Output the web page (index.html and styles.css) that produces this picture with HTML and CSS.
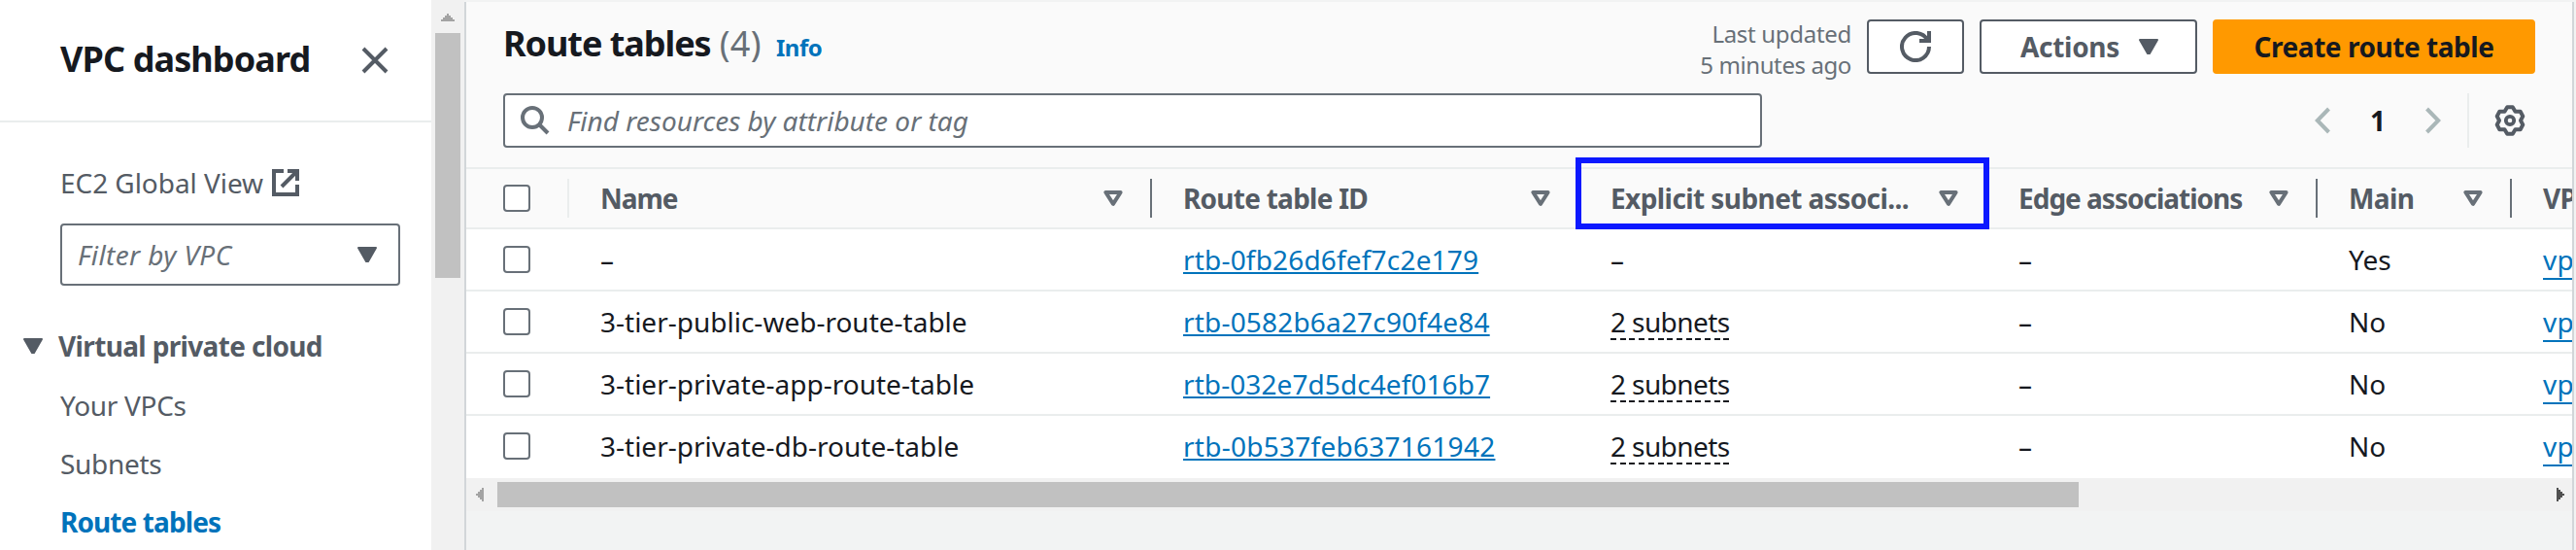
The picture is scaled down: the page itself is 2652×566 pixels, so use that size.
FILE: index.html
```
<!DOCTYPE html>
<html lang="en">
<head>
<meta charset="utf-8">
<title>Route tables | VPC</title>
<link rel="stylesheet" href="styles.css">
</head>
<body>
<svg class="defs" width="0" height="0" aria-hidden="true">
  <symbol id="caret" viewBox="0 0 20 16"><path d="M1 1h18L11 15H9z" fill="currentColor" stroke="currentColor" stroke-width="2" stroke-linejoin="round"/></symbol>
  <symbol id="sort" viewBox="0 0 20 16"><path d="M2.4 2h15.2L10 13.8z" fill="none" stroke="currentColor" stroke-width="4" stroke-linejoin="round"/></symbol>
</svg>
<div class="app">
  <aside class="side">
    <div class="side-main">
      <header class="side-head">
        <h2 class="side-title">VPC dashboard</h2>
        <svg class="close" viewBox="0 0 28 28"><path d="M2 2l24 24M26 2L2 26" fill="none" stroke="currentColor" stroke-width="4"/></svg>
      </header>
      <nav class="side-body">
        <a class="global">EC2 Global View
          <svg class="ext" viewBox="0 0 28 28"><path d="M12 2H2v24h24V16M16 2h10v10M25 3L10 18" fill="none" stroke="currentColor" stroke-width="4"/></svg>
        </a>
        <div class="select"><span class="select-text">Filter by VPC</span><svg class="caret"><use href="#caret"/></svg></div>
        <div class="group"><svg class="caret"><use href="#caret"/></svg><span>Virtual private cloud</span></div>
        <a class="item">Your VPCs</a>
        <a class="item">Subnets</a>
        <a class="item active">Route tables</a>
      </nav>
    </div>
    <div class="vbar">
      <svg class="up" viewBox="0 0 14 8" shape-rendering="crispEdges"><path d="M0 8V6h2V4h2V2h2V0h2v2h2v2h2v2h2v2z" fill="#a3a3a3"/></svg>
      <div class="vthumb"></div>
    </div>
  </aside>
  <main class="panel">
    <section class="tools">
      <div class="row">
        <h1 class="title">Route tables</h1><span class="count">(4)</span><a class="info">Info</a>
        <div class="updated"><div>Last updated</div><div class="ago">5 minutes ago</div></div>
        <button class="btn refresh"><svg class="ic32" viewBox="0 0 32 32"><path d="M30 16a14 14 0 1 1-1.6-6.5" fill="none" stroke="currentColor" stroke-width="4"/><path d="M20 10h10V0" fill="none" stroke="currentColor" stroke-width="4"/></svg></button>
        <button class="btn actions"><span>Actions</span><svg class="caret"><use href="#caret"/></svg></button>
        <button class="btn create">Create route table</button>
      </div>
      <div class="row">
        <div class="search">
          <svg class="glass" viewBox="0 0 30 30"><circle cx="12" cy="12" r="10" fill="none" stroke="currentColor" stroke-width="4"/><path d="M19 19l9 9" stroke="currentColor" stroke-width="4"/></svg>
          <span>Find resources by attribute or tag</span>
        </div>
        <div class="pager">
          <svg class="chev" viewBox="0 0 16 28"><path d="M14.5 2L2.8 14l11.7 12" fill="none" stroke="currentColor" stroke-width="4"/></svg>
          <b class="page">1</b>
          <svg class="chev" viewBox="0 0 16 28"><path d="M1.5 2l11.7 12L1.5 26" fill="none" stroke="currentColor" stroke-width="4"/></svg>
        </div>
        <div class="prefs"><svg class="ic32" viewBox="0 0 32 32"><path d="M13.2 2.2h5.6L21.5 6.7h5.2l2.6 4.9L27 16l2.3 4.4-2.6 4.9h-5.2l-2.7 4.5h-5.6l-2.7-4.5H5.3l-2.6-4.9L5 16l-2.3-4.4 2.6-4.9h5.2z" fill="none" stroke="currentColor" stroke-width="4" stroke-linejoin="round"/><circle cx="16" cy="16" r="4.2" fill="none" stroke="currentColor" stroke-width="3.8"/></svg></div>
      </div>
    </section>
    <div class="grid-wrap">
      <table class="grid">
        <colgroup><col class="c0"><col class="c1"><col class="c2"><col class="c3"><col class="c4"><col class="c5"><col class="c6"></colgroup>
        <thead>
          <tr>
            <th><div class="h pick"><i class="box"></i></div></th>
            <th><div class="h"><span class="tight">Name</span><svg class="caret"><use href="#sort"/></svg></div></th>
            <th><div class="h bare"><span>Route table ID</span><svg class="caret"><use href="#sort"/></svg></div></th>
            <th class="marked"><div class="h bare"><span class="loose">Explicit subnet associ...</span><svg class="caret"><use href="#sort"/></svg></div></th>
            <th><div class="h"><span class="tight">Edge associations</span><svg class="caret"><use href="#sort"/></svg></div></th>
            <th><div class="h"><span class="loose">Main</span><svg class="caret"><use href="#sort"/></svg></div></th>
            <th><div class="h bare"><span>VPC</span></div></th>
          </tr>
        </thead>
        <tbody>
          <tr><td><i class="box"></i></td><td>–</td><td><a class="id">rtb-0fb26d6fef7c2e179</a></td><td>–</td><td>–</td><td>Yes</td><td><a class="vpc">vpc</a></td></tr>
          <tr><td><i class="box"></i></td><td>3-tier-public-web-route-table</td><td><a class="id">rtb-0582b6a27c90f4e84</a></td><td><span class="subs">2 subnets</span></td><td>–</td><td>No</td><td><a class="vpc">vpc</a></td></tr>
          <tr><td><i class="box"></i></td><td>3-tier-private-app-route-table</td><td><a class="id snug">rtb-032e7d5dc4ef016b7</a></td><td><span class="subs">2 subnets</span></td><td>–</td><td>No</td><td><a class="vpc">vpc</a></td></tr>
          <tr><td><i class="box"></i></td><td>3-tier-private-db-route-table</td><td><a class="id wide">rtb-0b537feb637161942</a></td><td><span class="subs">2 subnets</span></td><td>–</td><td>No</td><td><a class="vpc">vpc</a></td></tr>
        </tbody>
      </table>
    </div>
    <div class="hbar">
      <svg class="side-arrow" viewBox="0 0 8 14" shape-rendering="crispEdges"><path d="M8 0H6v2H4v2H2v2H0v2h2v2h2v2h2v2h2z" fill="#a3a3a3"/></svg>
      <div class="hthumb"></div>
      <svg class="side-arrow" viewBox="0 0 8 14" shape-rendering="crispEdges"><path d="M0 0h2v2h2v2h2v2h2v2H6v2H4v2H2v2H0z" fill="#505050"/></svg>
    </div>
  </main>
</div>
</body>
</html>
```
FILE: styles.css
```
*, *::after { box-sizing: border-box; }
body {
  margin: 0;
  background: #f2f3f3;
  color: #16191f;
  font: 28px/40px "Noto Sans", "Open Sans", sans-serif;
  overflow: hidden;
}
.defs { position: absolute; }
svg { display: block; flex: none; }
h1, h2 { margin: 0; font-size: 36px; font-weight: 700; }
.app { display: flex; height: 566px; overflow: hidden; }
.caret { width: 20px; height: 16px; }
.ic32 { width: 32px; height: 32px; }

/* Sidebar */
.side { display: flex; width: 478px; flex: none; background: #fff; color: #545b64; }
.side-main { width: 444px; }
.side-head {
  display: flex; align-items: center; justify-content: space-between;
  height: 126px; padding: 0 44px 0 62px; border-bottom: 2px solid #eaeded;
}
.side-title { color: #16191f; line-height: 48px; letter-spacing: -0.9px; padding-bottom: 3px; }
.close { width: 28px; height: 28px; }
.side-body { padding: 42px 32px 0 62px; }
.global { display: flex; align-items: center; gap: 9px; height: 40px; letter-spacing: -0.05px; }
.ext { width: 28px; height: 28px; }
.select {
  display: flex; align-items: center; justify-content: space-between;
  width: 350px; height: 64px; margin-top: 22px; padding: 0 22px 0 16px;
  border: 2px solid #687078; border-radius: 4px;
}
.select-text { color: #687078; font-style: italic; letter-spacing: 0.4px; }
.group {
  display: flex; align-items: center; gap: 16px;
  height: 40px; margin: 42px 0 21px -38px;
  font-weight: 700; letter-spacing: -0.65px;
}
.item { display: block; height: 40px; margin-bottom: 20px; letter-spacing: -0.3px; }
.item.active { color: #0073bb; font-weight: 700; letter-spacing: -0.9px; }
.vbar { width: 34px; padding-top: 14px; background: #f1f1f1; }
.up { width: 14px; height: 8px; margin-left: 10px; }
.vthumb { width: 26px; height: 252px; margin: 12px 0 0 4px; background: #c1c1c1; }

/* Route table panel */
.panel {
  width: 2172px; flex: none; margin-top: 2px;
  border-left: 2px solid #d2d6d9; border-right: 2px solid #d2d6d9;
}
.tools {
  display: flex; flex-direction: column; gap: 20px;
  height: 172px; padding: 18px 38px 0 38px;
  background: #fafafa; border-bottom: 2px solid #eaeded;
}
.row { display: flex; align-items: center; height: 56px; }
.title { letter-spacing: -1.05px; line-height: 44px; padding-bottom: 7px; }
.count { margin-left: 9px; padding-bottom: 7px; color: #687078; font-size: 36px; line-height: 44px; letter-spacing: 0.4px; }
.info { margin: 2px 0 0 15px; color: #0073bb; font-size: 24px; font-weight: 700; letter-spacing: -0.5px; }
.updated { margin: 6px 0 0 auto; color: #687078; font-size: 24px; line-height: 32px; letter-spacing: -0.3px; text-align: right; }
.ago { letter-spacing: -0.4px; }
.btn {
  display: flex; align-items: center; height: 56px; padding: 0;
  border: 2px solid #545b64; border-radius: 4px; background: #fff;
  color: #545b64; font: 700 28px/40px "Noto Sans", "Open Sans", sans-serif;
}
.refresh { justify-content: center; width: 100px; margin-left: 16px; }
.actions { width: 224px; margin-left: 16px; padding: 0 38px 0 40px; justify-content: space-between; letter-spacing: -0.3px; }
.create { justify-content: center; width: 332px; margin-left: 16px; border-color: #f90; background: #f90; color: #16191f; letter-spacing: -0.45px; }
.search {
  display: flex; align-items: center; gap: 18px;
  width: 1296px; height: 56px; padding-left: 16px;
  border: 2px solid #687078; border-radius: 4px; background: #fff;
  color: #687078; font-style: italic;
}
.glass { width: 30px; height: 30px; }
.pager { display: flex; align-items: center; margin-left: auto; color: #aab7b8; }
.chev { width: 16px; height: 28px; }
.page { width: 98px; text-align: center; color: #16191f; }
.prefs {
  display: flex; align-items: center; justify-content: flex-end;
  width: 70px; height: 56px; margin-left: 27px; padding-right: 10px;
  border-left: 2px solid #eaeded; color: #545b64;
}

/* Table */
.grid-wrap { overflow-x: clip; overflow-y: visible; height: 318px; background: #fff; }
.grid { width: 2256px; table-layout: fixed; border-spacing: 0; }
.c0 { width: 106px; }
.c1 { width: 600px; }
.c2 { width: 440px; }
.c3 { width: 420px; }
.c4 { width: 340px; }
.c5 { width: 200px; }
.c6 { width: 150px; }
th { position: relative; height: 62px; padding: 0; background: #fafafa; border-bottom: 2px solid #eaeded; color: #545b64; letter-spacing: -0.75px; text-align: left; white-space: nowrap; }
.h {
  display: flex; align-items: center; justify-content: space-between;
  height: 40px; padding: 0 28px 0 32px; border-right: 2px solid #687078;
}
.h span { padding-bottom: 1px; }
.h.bare { border-color: transparent; }
.h.pick { padding-left: 38px; border-color: #eaeded; }
.h .tight { letter-spacing: -1px; }
.h .loose { letter-spacing: -0.58px; }
.h .caret { color: #687078; }
.marked { z-index: 1; }
.marked::after {
  content: ""; position: absolute; top: -12px; left: -4px;
  width: 426px; height: 74px; border: 6px solid #0b18ff;
}
td { height: 64px; padding: 0 0 0 32px; border-bottom: 2px solid #eaeded; white-space: nowrap; }
tbody tr:last-child td { border-bottom-color: #fff; }
td:first-child { padding-left: 38px; }
.box { display: block; width: 28px; height: 28px; border: 2px solid #687078; border-radius: 4px; background: #fff; }
.id, .vpc { color: #0073bb; text-decoration: underline 2px; text-underline-offset: 2px; text-decoration-skip-ink: none; letter-spacing: 0.18px; }
.id.snug { letter-spacing: 0.08px; }
.id.wide { letter-spacing: 0.26px; }
.vpc { text-underline-offset: 8px; }
.subs {
  display: inline-block; letter-spacing: -0.6px;
  background: repeating-linear-gradient(90deg, #16191f 0 6px, transparent 6px 9.7px) 0 37px / 100% 2px no-repeat;
}

/* Horizontal scrollbar */
.hbar { display: flex; align-items: center; height: 34px; padding: 0 8px 0 10px; background: #f1f1f1; }
.side-arrow { width: 8px; height: 14px; }
.hthumb { width: 1628px; height: 26px; margin: 0 auto 0 14px; background: #c1c1c1; }
```
